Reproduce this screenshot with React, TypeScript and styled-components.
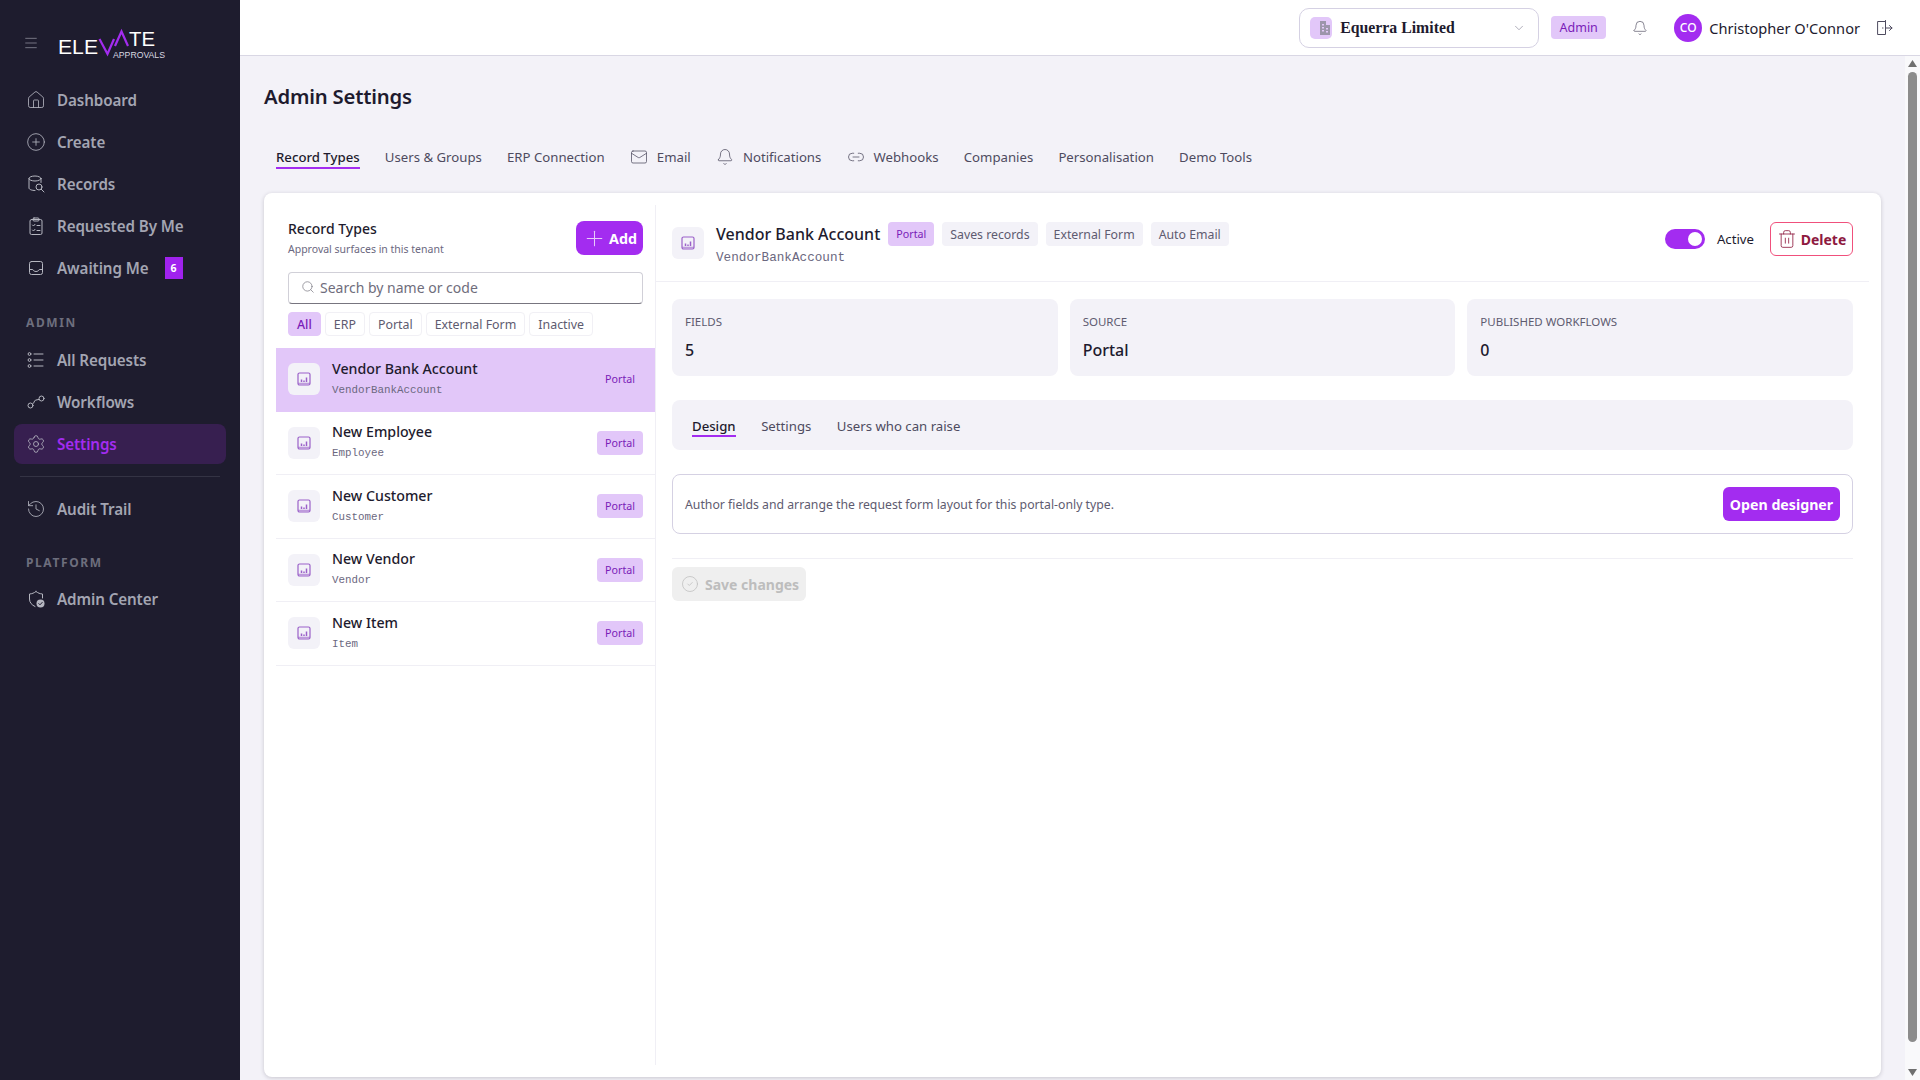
import React from 'react';
import styled, { createGlobalStyle } from 'styled-components';
import { ChevronDown, Search, Plus, Mail, Bell, Link2, Trash2, Settings as Gear, History, CircleCheck, Menu, House, CirclePlus } from 'lucide-react';

const PRIMARY = '#a32cf0';
const SOFT = '#e2c7f9';
const SOFT_TEXT = '#7a1cb8';
const FONT = '"Noto Sans", "Open Sans", sans-serif';

const Global = createGlobalStyle`
  html, body { margin: 0; padding: 0; height: 100%; overflow: hidden; }
  body { font-family: ${FONT}; background: #f3f2f8; color: #1e1b2e; }
  * { box-sizing: border-box; }
`;

const Shell = styled.div`
  display: flex;
  width: 100vw;
  height: 100vh;
`;

const Sidebar = styled.aside`
  width: 240px;
  flex: none;
  background: #1e1c2e;
  display: flex;
  flex-direction: column;
  padding: 0 14px;
`;

const Brand = styled.div`
  height: 80px;
  display: flex;
  align-items: flex-start;
  padding: 27px 0 0 9px;
  color: #8b8c99;
  gap: 19px;
`;

const Row = styled.div<{ $active?: boolean }>`
  height: 40px;
  margin-bottom: 2px;
  padding-left: 12px;
  display: flex;
  align-items: center;
  gap: 11px;
  border-radius: 8px;
  font-size: 15.2px;
  font-weight: 600;
  letter-spacing: -0.1px;
  color: ${p => (p.$active ? PRIMARY : '#a3a5b2')};
  background: ${p => (p.$active ? '#371f50' : 'transparent')};
  svg { flex: none; color: #b5b6c0; }
`;

const Count = styled.span`
  width: 18px;
  height: 22px;
  margin-left: 5px;
  background: #a022ee;
  color: #fff;
  font-size: 10.5px;
  font-weight: 700;
  display: flex;
  align-items: center;
  justify-content: center;
`;

const Section = styled.div<{ $top: number; $bottom: number }>`
  height: 20px;
  line-height: 20px;
  margin: ${p => p.$top}px 0 ${p => p.$bottom}px 12px;
  font-size: 12px;
  font-weight: 700;
  letter-spacing: 1.6px;
  color: #6d6e7d;
`;

const Rule = styled.div`
  height: 1px;
  margin: 10px 6px 12px;
  background: #343344;
`;

const Column = styled.div`
  flex: 1;
  min-width: 0;
  display: flex;
  flex-direction: column;
`;

const Header = styled.header`
  height: 56px;
  flex: none;
  background: #fff;
  border-bottom: 1px solid #d9d7e4;
  display: flex;
  align-items: center;
  justify-content: flex-end;
  padding-right: 27px;
`;

const Company = styled.div`
  width: 240px;
  height: 40px;
  border: 1px solid #d5d1e3;
  border-radius: 10px;
  display: flex;
  align-items: center;
  padding: 0 12px 0 10px;
  font-family: "Liberation Serif", serif;
  font-weight: 700;
  font-size: 15.8px;
  color: #1e1b2e;
  svg:last-child { margin-left: auto; color: #8f8c9e; }
`;

const CompanyIcon = styled.span`
  width: 22px;
  height: 22px;
  border-radius: 5px;
  background: ${SOFT};
  margin-right: 8px;
  display: flex;
  align-items: center;
  justify-content: center;
  color: #9a6cc4;
`;

const RoleBadge = styled.span`
  margin-left: 12px;
  width: 55px;
  height: 23px;
  border-radius: 4px;
  background: ${SOFT};
  color: ${SOFT_TEXT};
  font-size: 12.5px;
  display: flex;
  align-items: center;
  justify-content: center;
`;

const BellWrap = styled.span`
  margin: 0 26px 0 26px;
  display: flex;
  color: #4e4b5f;
`;

const Avatar = styled.span`
  width: 28px;
  height: 28px;
  border-radius: 50%;
  background: ${PRIMARY};
  color: #fff;
  font-size: 12px;
  font-weight: 500;
  display: flex;
  align-items: center;
  justify-content: center;
  margin-right: 7px;
`;

const UserName = styled.span`
  font-size: 14.6px;
  margin-right: 15px;
  color: #1e1b2e;
`;

const Workspace = styled.div`
  flex: 1;
  min-height: 0;
  display: flex;
`;

const Main = styled.main`
  flex: 1;
  min-width: 0;
  overflow: hidden;
  padding: 24px;
`;

const Rail = styled.div`
  width: 15px;
  flex: none;
  background: #f9f9fb;
  display: flex;
  flex-direction: column;
  align-items: center;
  justify-content: space-between;
  color: #707070;
`;

const RailArrow = styled.span`
  height: 15px;
  display: flex;
  align-items: center;
`;

const Thumb = styled.div`
  width: 9px;
  height: 970px;
  margin-top: 1px;
  margin-bottom: auto;
  border-radius: 5px;
  background: #8c8c8c;
`;

const Title = styled.h1`
  margin: 0;
  font-size: 20.3px;
  line-height: 32px;
  font-weight: 600;
  letter-spacing: -0.2px;
  color: #1e1b2e;
`;

const Tabs = styled.nav`
  margin: 35px 0 24px 12px;
  height: 22px;
  display: flex;
  gap: 25.2px;
`;

const Tab = styled.span<{ $active?: boolean }>`
  height: 22px;
  line-height: 20px;
  display: flex;
  align-items: flex-start;
  gap: 9px;
  font-size: 13.2px;
  font-weight: ${p => (p.$active ? 500 : 400)};
  color: ${p => (p.$active ? '#1e1b2e' : '#4e4b5f')};
  border-bottom: 2px solid ${p => (p.$active ? PRIMARY : 'transparent')};
  svg { margin-top: 1px; }
`;

const Card = styled.section`
  height: 884px;
  background: #fff;
  border-radius: 8px;
  box-shadow: 0 1px 4px rgba(30, 27, 46, 0.2);
  padding: 12px;
  display: flex;
`;

const ListPanel = styled.div`
  width: 380px;
  flex: none;
  border-right: 1px solid #f0eff5;
  display: flex;
  flex-direction: column;
`;

const ListTop = styled.div`
  padding: 16px 12px 12px 12px;
`;

const ListHead = styled.div`
  display: flex;
  justify-content: space-between;
`;

const ListTitle = styled.div`
  font-size: 14px;
  line-height: 20px;
  margin-top: -2px;
  font-weight: 500;
`;

const ListSub = styled.div`
  font-size: 10.5px;
  line-height: 14px;
  margin-top: 3px;
  color: #6b6880;
`;

const AddButton = styled.button`
  width: 67px;
  height: 34px;
  border: 0;
  border-radius: 8px;
  background: ${PRIMARY};
  color: #fff;
  font-family: ${FONT};
  font-size: 14.3px;
  font-weight: 700;
  display: flex;
  align-items: center;
  justify-content: center;
  gap: 2px;
  padding: 0;
  svg { opacity: 0.75; }
`;

const SearchBox = styled.div`
  margin-top: 16px;
  height: 32px;
  border: 1px solid #d1d0d8;
  border-bottom-color: #77757f;
  border-radius: 4px;
  padding: 0 0 2px 12px;
  display: flex;
  align-items: center;
  gap: 5px;
  font-size: 14px;
  color: #6f6d7c;
  svg { color: #77757f; }
`;

const Filters = styled.div`
  margin-top: 8px;
  display: flex;
  gap: 4px;
`;

const Filter = styled.span<{ $active?: boolean }>`
  height: 24px;
  padding: 0 8px;
  border-radius: 4px;
  border: 1px solid ${p => (p.$active ? SOFT : '#f1f0f5')};
  background: ${p => (p.$active ? SOFT : '#fff')};
  color: ${p => (p.$active ? SOFT_TEXT : '#5e5b70')};
  font-size: 12.4px;
  font-weight: ${p => (p.$active ? 500 : 400)};
  display: flex;
  align-items: center;
`;

const Record = styled.div<{ $active?: boolean }>`
  height: 63.5px;
  padding: 0 12px;
  display: flex;
  align-items: center;
  gap: 12px;
  background: ${p => (p.$active ? SOFT : '#fff')};
  border-bottom: 1px solid ${p => (p.$active ? SOFT : '#f0eff5')};
`;

const TypeIcon = styled.span`
  width: 32px;
  height: 32px;
  flex: none;
  border-radius: 6px;
  background: #f3f2f8;
  color: #9b61c9;
  display: flex;
  align-items: center;
  justify-content: center;
`;

const RecordText = styled.div`
  flex: 1;
  min-width: 0;
`;

const RecordName = styled.div`
  font-size: 14.2px;
  line-height: 20px;
  margin-top: -2px;
  font-weight: 500;
`;

const Code = styled.div<{ $large?: boolean }>`
  font-family: "Liberation Mono", monospace;
  font-size: ${p => (p.$large ? '12.67px' : '10.85px')};
  line-height: 16px;
  margin-top: ${p => (p.$large ? '4px' : '3px')};
  color: #6b6880;
`;

const Badge = styled.span<{ $soft?: boolean; $flat?: boolean }>`
  height: 24px;
  padding: 0 8px;
  border-radius: 4px;
  flex: none;
  font-size: ${p => (p.$soft || p.$flat ? '10.7px' : '12.3px')};
  display: flex;
  align-items: center;
  background: ${p => (p.$flat ? 'transparent' : p.$soft ? SOFT : '#f3f2f8')};
  color: ${p => (p.$soft || p.$flat ? SOFT_TEXT : '#5e5b70')};
`;

const Detail = styled.div`
  flex: 1;
  min-width: 0;
  display: flex;
  flex-direction: column;
`;

const DetailHead = styled.div`
  height: 77px;
  flex: none;
  padding: 17px 16px 0;
  border-bottom: 1px solid #f0eff5;
  display: flex;
  justify-content: space-between;
  align-items: flex-start;
`;

const HeadLeft = styled.div`
  display: flex;
  gap: 12px;
  ${TypeIcon} { margin-top: 5px; }
`;

const NameRow = styled.div`
  display: flex;
  align-items: center;
  gap: 8px;
`;

const DetailName = styled.div`
  font-size: 16px;
  line-height: 24px;
  font-weight: 500;
`;

const HeadRight = styled.div`
  display: flex;
  align-items: center;
  height: 34px;
`;

const Toggle = styled.span`
  width: 40px;
  height: 20px;
  border-radius: 10px;
  background: ${PRIMARY};
  display: flex;
  align-items: center;
  justify-content: flex-end;
  padding-right: 3px;
  &::after {
    content: '';
    width: 14px;
    height: 14px;
    border-radius: 50%;
    background: #fff;
  }
`;

const ToggleLabel = styled.span`
  font-size: 13.2px;
  margin: 0 16px 0 12px;
`;

const DeleteButton = styled.button`
  width: 83px;
  height: 34px;
  background: #fff;
  border: 1px solid #f0507c;
  border-radius: 6px;
  color: #8e1a3f;
  font-family: ${FONT};
  font-size: 14px;
  font-weight: 700;
  display: flex;
  align-items: center;
  justify-content: center;
  gap: 4px;
  padding: 0;
`;

const Body = styled.div`
  padding: 17px 16px 0;
`;

const Stats = styled.div`
  display: grid;
  grid-template-columns: repeat(3, 1fr);
  gap: 12px;
`;

const Stat = styled.div`
  height: 77px;
  border-radius: 8px;
  background: #f3f2f8;
  padding: 15px 13px 0;
`;

const StatLabel = styled.div`
  font-size: 11.5px;
  line-height: 16px;
  text-transform: uppercase;
  color: #5e5b70;
`;

const StatValue = styled.div`
  margin-top: 8px;
  font-size: 16px;
  line-height: 24px;
  font-weight: 500;
`;

const SubTabs = styled.div`
  margin-top: 24px;
  height: 50px;
  border-radius: 8px;
  background: #f3f2f8;
  padding: 16px 0 0 20px;
  display: flex;
  gap: 25.5px;
`;

const SubTab = styled.span<{ $active?: boolean }>`
  height: 21px;
  line-height: 20px;
  font-size: 13.2px;
  font-weight: ${p => (p.$active ? 500 : 400)};
  color: ${p => (p.$active ? '#1e1b2e' : '#4e4b5f')};
  border-bottom: 2px solid ${p => (p.$active ? PRIMARY : 'transparent')};
`;

const Notice = styled.div`
  margin-top: 24px;
  height: 60px;
  border: 1px solid #d5d1e3;
  border-radius: 8px;
  padding: 0 12px;
  display: flex;
  align-items: center;
  justify-content: space-between;
  font-size: 12.25px;
  color: #5e5b70;
`;

const PrimaryButton = styled.button`
  width: 117px;
  height: 34px;
  border: 0;
  border-radius: 6px;
  background: ${PRIMARY};
  color: #fff;
  font-family: ${FONT};
  font-size: 14.2px;
  font-weight: 700;
  padding: 0;
`;

const BodyRule = styled.div`
  margin-top: 24px;
  height: 1px;
  background: #f0eff5;
`;

const SaveButton = styled.button`
  margin-top: 8px;
  width: 134px;
  height: 34px;
  border: 0;
  border-radius: 6px;
  background: #efefef;
  color: #bdbdbd;
  font-family: ${FONT};
  font-size: 14px;
  font-weight: 700;
  display: flex;
  align-items: center;
  gap: 6px;
  padding: 0 0 0 9px;
`;

const Draw: React.FC<{ children: React.ReactNode }> = ({ children }) => (
  <svg width={20} height={20} viewBox="0 0 20 20" fill="none" stroke="currentColor" strokeWidth="1" strokeLinecap="round" strokeLinejoin="round">
    {children}
  </svg>
);

const RecordsIcon = () => (
  <Draw>
    <ellipse cx="9" cy="4.5" rx="6" ry="2.5" />
    <path d="M3 4.5V14c0 1.4 2.7 2.5 6 2.5M15 4.5v4" />
    <circle cx="13" cy="13" r="3" />
    <path d="M15.2 15.2L18 18" />
  </Draw>
);

const RequestedIcon = () => (
  <Draw>
    <rect x="4" y="3.5" width="12" height="15" rx="1.5" />
    <rect x="7" y="2" width="6" height="3" rx="1" />
    <path d="M6.5 9l1 1 1.5-1.7M11 9.5h3M6.5 14l1 1 1.5-1.7M11 14.5h3" />
  </Draw>
);

const InboxIcon = () => (
  <Draw>
    <rect x="3.5" y="3.5" width="13" height="13" rx="2" />
    <path d="M3.5 11.5h3.2c.5 1.2 1.8 2 3.3 2s2.8-.8 3.3-2h3.2" />
  </Draw>
);

const ListIcon = () => (
  <Draw>
    <circle cx="3.5" cy="4" r="1.4" />
    <circle cx="3.5" cy="10" r="1.4" />
    <circle cx="3.5" cy="16" r="1.4" />
    <path d="M8 4h9M8 10h9M8 16h9" />
  </Draw>
);

const FlowIcon = () => (
  <Draw>
    <circle cx="4.5" cy="13.5" r="2.5" />
    <circle cx="15.5" cy="6.5" r="2.5" />
    <path d="M6.6 12.2c1.7-1 1.4-3.2 2.8-4 .9-.5 2.2-.3 3.6-.7" />
  </Draw>
);

const ShieldIcon = () => (
  <Draw>
    <path d="M10 2.5c2 1.6 4 2.3 6.5 2.5v4M10 2.5C8 4.1 6 4.8 3.5 5v5c0 3.5 2.2 6 5.5 7.5" />
    <circle cx="14.5" cy="14.5" r="4" fill="#b5b6c0" stroke="none" />
    <path d="M12.8 14.6l1.2 1.2 2.2-2.4" stroke="#1e1c2e" />
  </Draw>
);

const DataIcon = () => (
  <svg width="16" height="16" viewBox="0 0 16 16" fill="none" stroke="currentColor" strokeWidth="1.2">
    <rect x="2" y="2" width="12" height="12" rx="1.5" />
    <path d="M2 12.5h12" strokeWidth="1.6" opacity="0.6" />
    <path d="M5.5 8.500v2.500M8 9.500v1.500M10.500 6.500v4.500" strokeWidth="1.5" />
  </svg>
);

const BuildingIcon = () => (
  <svg width="14" height="16" viewBox="0 0 14 16" fill="currentColor">
    <path d="M2 1h6v4h4v10H2z" opacity="0.85" />
    <path d="M4 4h2v1.500H4zM4 7h2v1.500H4zM4 10h2v1.500H4zM8 8h2v1.500H8zM8 11h2v1.500H8z" fill="#e2c7f9" />
  </svg>
);

const DoorIcon = () => (
  <svg width="18" height="18" viewBox="0 0 18 18" fill="none" stroke="#4e4b5f" strokeWidth="1" strokeLinecap="round" strokeLinejoin="round">
    <path d="M3 2.500h7.500v13H3zM10.500 2.500V1.500M10.500 9H17M14.500 6.500L17 9l-2.500 2.500M7.500 9h.5" />
  </svg>
);

const Logo = () => (
  <svg width="112" height="36" viewBox="0 0 112 36">
    <text x="0" y="27" fontFamily="Liberation Sans" fontSize="21" fill="#fff" textLength="40" lengthAdjust="spacingAndGlyphs">ELE</text>
    <polyline points="41.500,12 49.500,27 56,12" fill="none" stroke="#a32cf0" strokeWidth="2.200" />
    <polyline points="57,19 63.500,4.500 70,19" fill="none" stroke="#a32cf0" strokeWidth="2.200" />
    <text x="71" y="19" fontFamily="Liberation Sans" fontSize="21" fill="#fff" textLength="26" lengthAdjust="spacingAndGlyphs">TE</text>
    <text x="55" y="31" fontFamily="Liberation Sans" fontSize="8.500" fill="#d9d9e2" textLength="52" lengthAdjust="spacingAndGlyphs">APPROVALS</text>
  </svg>
);

const records = [
  { name: 'Vendor Bank Account', code: 'VendorBankAccount', active: true },
  { name: 'New Employee', code: 'Employee' },
  { name: 'New Customer', code: 'Customer' },
  { name: 'New Vendor', code: 'Vendor' },
  { name: 'New Item', code: 'Item' },
];

export default function App() {
  return (
    <Shell>
      <Global />
      <Sidebar>
        <Brand>
          <Menu size={16} strokeWidth={1.2} style={{ marginTop: 8 }} />
          <Logo />
        </Brand>
        <Row><House size={20} strokeWidth={1} />Dashboard</Row>
        <Row><CirclePlus size={20} strokeWidth={1} />Create</Row>
        <Row><RecordsIcon />Records</Row>
        <Row><RequestedIcon />Requested By Me</Row>
        <Row><InboxIcon />Awaiting Me<Count>6</Count></Row>
        <Section $top={23} $bottom={7}>ADMIN</Section>
        <Row><ListIcon />All Requests</Row>
        <Row><FlowIcon />Workflows</Row>
        <Row $active><Gear size={20} strokeWidth={1} />Settings</Row>
        <Rule />
        <Row><History size={20} strokeWidth={1} />Audit Trail</Row>
        <Section $top={22} $bottom={6}>PLATFORM</Section>
        <Row><ShieldIcon />Admin Center</Row>
      </Sidebar>
      <Column>
        <Header>
          <Company>
            <CompanyIcon><BuildingIcon /></CompanyIcon>
            Equerra Limited
            <ChevronDown size={14} strokeWidth={1.2} />
          </Company>
          <RoleBadge>Admin</RoleBadge>
          <BellWrap><Bell size={16} strokeWidth={1} /></BellWrap>
          <Avatar>CO</Avatar>
          <UserName>Christopher O'Connor</UserName>
          <DoorIcon />
        </Header>
        <Workspace>
          <Main>
            <Title>Admin Settings</Title>
            <Tabs>
              <Tab $active>Record Types</Tab>
              <Tab>Users &amp; Groups</Tab>
              <Tab>ERP Connection</Tab>
              <Tab><Mail size={18} strokeWidth={1} />Email</Tab>
              <Tab><Bell size={18} strokeWidth={1} />Notifications</Tab>
              <Tab><Link2 size={18} strokeWidth={1} />Webhooks</Tab>
              <Tab>Companies</Tab>
              <Tab>Personalisation</Tab>
              <Tab>Demo Tools</Tab>
            </Tabs>
            <Card>
              <ListPanel>
                <ListTop>
                  <ListHead>
                    <div>
                      <ListTitle>Record Types</ListTitle>
                      <ListSub>Approval surfaces in this tenant</ListSub>
                    </div>
                    <AddButton><Plus size={25} strokeWidth={1} />Add</AddButton>
                  </ListHead>
                  <SearchBox><Search size={14} strokeWidth={1.2} />Search by name or code</SearchBox>
                  <Filters>
                    <Filter $active>All</Filter>
                    <Filter>ERP</Filter>
                    <Filter>Portal</Filter>
                    <Filter>External Form</Filter>
                    <Filter>Inactive</Filter>
                  </Filters>
                </ListTop>
                {records.map(r => (
                  <Record key={r.code} $active={r.active}>
                    <TypeIcon><DataIcon /></TypeIcon>
                    <RecordText>
                      <RecordName>{r.name}</RecordName>
                      <Code>{r.code}</Code>
                    </RecordText>
                    <Badge $soft={!r.active} $flat={r.active}>Portal</Badge>
                  </Record>
                ))}
              </ListPanel>
              <Detail>
                <DetailHead>
                  <HeadLeft>
                    <TypeIcon><DataIcon /></TypeIcon>
                    <div>
                      <NameRow>
                        <DetailName>Vendor Bank Account</DetailName>
                        <Badge $soft>Portal</Badge>
                        <Badge>Saves records</Badge>
                        <Badge>External Form</Badge>
                        <Badge>Auto Email</Badge>
                      </NameRow>
                      <Code $large>VendorBankAccount</Code>
                    </div>
                  </HeadLeft>
                  <HeadRight>
                    <Toggle />
                    <ToggleLabel>Active</ToggleLabel>
                    <DeleteButton><Trash2 size={20} strokeWidth={1} />Delete</DeleteButton>
                  </HeadRight>
                </DetailHead>
                <Body>
                  <Stats>
                    <Stat><StatLabel>Fields</StatLabel><StatValue>5</StatValue></Stat>
                    <Stat><StatLabel>Source</StatLabel><StatValue>Portal</StatValue></Stat>
                    <Stat><StatLabel>Published workflows</StatLabel><StatValue>0</StatValue></Stat>
                  </Stats>
                  <SubTabs>
                    <SubTab $active>Design</SubTab>
                    <SubTab>Settings</SubTab>
                    <SubTab>Users who can raise</SubTab>
                  </SubTabs>
                  <Notice>
                    Author fields and arrange the request form layout for this portal-only type.
                    <PrimaryButton>Open designer</PrimaryButton>
                  </Notice>
                  <BodyRule />
                  <SaveButton><CircleCheck size={18} strokeWidth={1} />Save changes</SaveButton>
                </Body>
              </Detail>
            </Card>
          </Main>
          <Rail>
            <RailArrow><svg width="9" height="7" viewBox="0 0 9 7" fill="currentColor"><path d="M4.500 0L9 7H0z" /></svg></RailArrow>
            <Thumb />
            <RailArrow><svg width="9" height="7" viewBox="0 0 9 7" fill="currentColor"><path d="M4.500 7L9 0H0z" /></svg></RailArrow>
          </Rail>
        </Workspace>
      </Column>
    </Shell>
  );
}
